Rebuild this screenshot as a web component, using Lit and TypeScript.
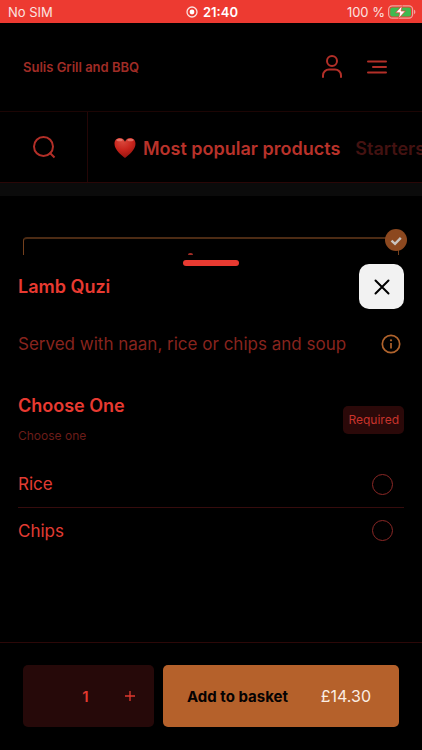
import { LitElement, html, css, svg } from "lit";
import { customElement, property, state } from "lit/decorators.js";

const userIcon = svg`<svg width="24" height="26" viewBox="0 0 24 26" fill="none" stroke="currentColor" stroke-width="2" stroke-linecap="round" aria-hidden="true"><circle cx="12" cy="7" r="5"/><path d="M3 23v-1.500a6 6 0 0 1 6-6h6a6 6 0 0 1 6 6V23"/></svg>`;
const menuIcon = svg`<svg width="22" height="16" viewBox="0 0 22 16" fill="none" stroke="currentColor" stroke-width="2" stroke-linecap="round" aria-hidden="true"><path d="M2 2.500h18M7 8h13M2 13.500h18"/></svg>`;
const searchIcon = svg`<svg width="24" height="24" viewBox="0 0 24 24" fill="none" stroke="currentColor" stroke-width="2" aria-hidden="true"><circle cx="11.500" cy="11.500" r="9.500"/><path d="M17.500 17.500l5 5"/></svg>`;
const heartIcon = svg`<svg width="22" height="22" viewBox="0 0 22 22" aria-hidden="true"><defs><radialGradient id="heart" cx=".4" cy=".15" r=".9"><stop offset="0" stop-color="#d94a3d"/><stop offset=".5" stop-color="#c8241c"/><stop offset="1" stop-color="#8f120e"/></radialGradient></defs><path d="M11 21C7 18 .5 12.500 .5 6.700.5 3.200 2.800 1 5.700 1 8.200 1 10.200 2.500 11 4.800 11.800 2.500 13.800 1 16.300 1c2.900 0 5.200 2.200 5.200 5.700C21.500 12.500 15 18 11 21z" fill="url(#heart)"/><ellipse cx="5.500" cy="3" rx="3.200" ry="1.300" fill="#f0988c" opacity=".6"/><ellipse cx="16.500" cy="3" rx="3.200" ry="1.300" fill="#f0988c" opacity=".6"/></svg>`;
const checkIcon = svg`<svg width="22" height="22" viewBox="0 0 22 22" fill="none" aria-hidden="true"><circle cx="11" cy="11" r="11" fill="#8c481f"/><path d="M6.500 11.600l3.500 3.200 5.800-6" stroke="#c9c3bf" stroke-width="2.400"/></svg>`;
const closeIcon = svg`<svg width="18" height="18" viewBox="0 0 18 18" fill="none" stroke="#000" stroke-width="2" stroke-linecap="round" aria-hidden="true"><path d="M2.500 2.500l13 13M15.500 2.500l-13 13"/></svg>`;
const infoIcon = svg`<svg width="20" height="20" viewBox="0 0 20 20" fill="none" stroke="currentColor" aria-hidden="true"><circle cx="10" cy="10" r="8.700" stroke-width="1.700"/><path d="M10 9v5.500" stroke-width="1.700"/><circle cx="10" cy="6.300" r="1.100" fill="currentColor" stroke="none"/></svg>`;
const recordIcon = svg`<svg width="12" height="12" viewBox="0 0 12 12" aria-hidden="true"><circle cx="6" cy="6" r="5" fill="none" stroke="#fbe3e0" stroke-width="1.300"/><circle cx="6" cy="6" r="2.400" fill="#fff"/></svg>`;
const batteryIcon = svg`<svg width="28" height="14" viewBox="0 0 28 14" aria-hidden="true"><rect x=".6" y=".8" width="24" height="12.400" rx="3.600" fill="none" stroke="#f3a49d" stroke-width="1.200"/><rect x="2.200" y="2.400" width="20.800" height="9.200" rx="2" fill="#3fb950"/><path d="M26 4.800c1.800.6 1.800 3.800 0 4.400z" fill="#f3a49d"/><path d="M14.200.5L7.600 7.800h4.200l-1.200 5.700 6.800-7.500h-4.300z" fill="#fff" stroke="#ea3a30" stroke-width=".7"/></svg>`;
const plusIcon = svg`<svg width="10" height="10" viewBox="0 0 10 10" stroke="currentColor" stroke-width="1.300" aria-hidden="true"><path d="M0 5h10M5 0v10"/></svg>`;

const reset = css`
  :host { display: block; }
  * { box-sizing: border-box; margin: 0; }
  button { padding: 0; border: 0; background: none; color: inherit; font: inherit; cursor: pointer; }
  svg { display: block; }
`;

@customElement("status-bar")
class StatusBar extends LitElement {
  static styles = [reset, css`
    .bar { display: grid; grid-template-columns: 1fr auto 1fr; align-items: center; height: 23px; padding: 0 6px 0 8px; background: #ed3a31; color: #fbe3e0; font-size: 13px; }
    .clock { display: flex; align-items: center; gap: 5px; color: #fff; font-weight: 600; }
    .power { display: flex; align-items: center; justify-content: flex-end; gap: 3px; }
  `];
  render() {
    return html`<div class="bar">
      <span>No SIM</span>
      <span class="clock">${recordIcon}21:40</span>
      <span class="power">100 % ${batteryIcon}</span>
    </div>`;
  }
}

@customElement("shop-header")
class ShopHeader extends LitElement {
  static styles = [reset, css`
    .top { display: flex; align-items: center; justify-content: space-between; height: 89px; padding: 0 34px 0 23px; border-bottom: 1px solid #1c0504; color: #b32f28; }
    .brand { color: #a02c26; font-size: 13px; font-weight: 600; }
    .actions { display: flex; align-items: center; gap: 22px; }
    .nav { display: flex; height: 71px; border-bottom: 1px solid #2a0707; color: #b32f28; }
    .search { display: flex; flex: 0 0 88px; align-items: center; justify-content: center; border-right: 1px solid #240606; }
    .tabs { display: flex; align-items: center; gap: 15px; min-width: 0; padding: 2px 0 0 26px; overflow: hidden; font-size: 18px; font-weight: 600; white-space: nowrap; }
    .tab { display: flex; align-items: center; gap: 7px; color: #431211; text-decoration: none; }
    .current { color: #b8322a; }
  `];
  render() {
    return html`
      <header class="top">
        <h1 class="brand">Sulis Grill and BBQ</h1>
        <div class="actions">
          <button aria-label="Account">${userIcon}</button>
          <button aria-label="Menu">${menuIcon}</button>
        </div>
      </header>
      <nav class="nav">
        <button class="search" aria-label="Search">${searchIcon}</button>
        <div class="tabs">
          <a class="tab current" href="#popular">${heartIcon}Most popular products</a>
          <a class="tab" href="#starters">Starters</a>
        </div>
      </nav>`;
  }
}

@customElement("product-sheet")
class ProductSheet extends LitElement {
  @property({ type: Array }) options = ["Rice", "Chips"];
  static styles = [reset, css`
    :host { color: #e83a31; }
    .sheet { padding: 5px 18px 0; background: #000; }
    .handle { width: 56px; height: 6px; margin: 0 auto; border-radius: 3px; background: #e83a31; }
    .heading { display: flex; align-items: center; justify-content: space-between; height: 41px; }
    .title, .group-title { font-size: 18px; font-weight: 600; line-height: 24px; }
    .close { display: flex; align-items: center; justify-content: center; width: 45px; height: 45px; border-radius: 10px; background: #f2f2f2; }
    .about { display: flex; align-items: center; justify-content: space-between; height: 74px; color: #88241e; font-size: 17px; }
    .info { margin-right: 3px; color: #b0632c; }
    .group-head { display: flex; align-items: center; justify-content: space-between; padding: 13px 0 15px; }
    .hint { margin-top: 8px; color: #6b1d19; font-size: 12px; line-height: 20px; }
    .badge { padding: 0 5px; border-radius: 5px; background: #2b0909; color: #c9342c; font-size: 12px; line-height: 28px; }
    .option { display: flex; align-items: center; justify-content: space-between; height: 46px; padding-right: 11px; font-size: 17px; color: #e23c33; }
    .option + .option { border-top: 1px solid #360c0d; }
    .radio { appearance: none; width: 21px; height: 21px; margin: 0; border: 1px solid #8a2826; border-radius: 50%; }
    .radio:checked { box-shadow: inset 0 0 0 5px #000, inset 0 0 0 11px #e83a31; }
  `];
  render() {
    return html`<section class="sheet" aria-labelledby="title">
      <div class="handle"></div>
      <div class="heading">
        <h2 class="title" id="title">Lamb Quzi</h2>
        <button class="close" aria-label="Close">${closeIcon}</button>
      </div>
      <div class="about">
        <p>Served with naan, rice or chips and soup</p>
        <button class="info" aria-label="Product information">${infoIcon}</button>
      </div>
      <div role="radiogroup" aria-labelledby="group">
        <div class="group-head">
          <div>
            <h3 class="group-title" id="group">Choose One</h3>
            <p class="hint">Choose one</p>
          </div>
          <span class="badge">Required</span>
        </div>
        ${this.options.map((name) => html`<label class="option">${name}<input class="radio" type="radio" name="side" value=${name} /></label>`)}
      </div>
    </section>`;
  }
}

@customElement("basket-bar")
class BasketBar extends LitElement {
  @state() quantity = 1;
  static styles = [reset, css`
    .bar { display: grid; grid-template-columns: 131fr 236fr; gap: 9px; padding: 22px 23px 23px; border-top: 1px solid #2c0808; font-size: 15px; }
    .stepper { display: grid; grid-template-columns: 1fr auto 1fr; align-items: center; height: 62px; padding-right: 6px; border-radius: 5px; background: #260909; color: #e0392f; font-weight: 600; }
    .count { grid-column: 2; }
    .plus { display: flex; align-items: center; justify-content: center; height: 62px; padding-left: 24px; }
    .add { display: flex; align-items: center; justify-content: space-between; height: 62px; padding: 0 28px 0 24px; border-radius: 5px; background: #b5612b; color: #fbeee4; }
    .label { color: #050202; font-weight: 700; }
    .price { font-size: 16px; }
  `];
  render() {
    return html`<footer class="bar">
      <div class="stepper">
        <output class="count">${this.quantity}</output>
        <button class="plus" aria-label="Increase quantity" @click=${() => { this.quantity += 1; }}>${plusIcon}</button>
      </div>
      <button class="add"><span class="label">Add to basket</span><span class="price">£${(14.3 * this.quantity).toFixed(2)}</span></button>
    </footer>`;
  }
}

@customElement("app-root")
class AppRoot extends LitElement {
  static styles = [reset, css`
    :host { display: flex; flex-direction: column; min-height: 100vh; background: #000; font-family: Inter, "Liberation Sans", sans-serif; }
    .main { flex: 1; }
    .strip { height: 13px; background: #0b0b0b; }
    .behind { padding: 41px 23px 0; }
    .card { position: relative; height: 18px; border: 1px solid #74401d; border-top: 2px solid #4c2b14; border-bottom: 0; border-radius: 4px 4px 0 0; }
    .check { position: absolute; top: -10px; right: -9px; }
    .peek { position: absolute; left: 164px; bottom: 0; width: 5px; height: 2px; border-radius: 3px 3px 0 0; background: #a02c25; }
  `];
  render() {
    return html`
      <status-bar></status-bar>
      <shop-header></shop-header>
      <main class="main">
        <div class="strip"></div>
        <div class="behind"><div class="card"><span class="peek"></span><span class="check">${checkIcon}</span></div></div>
        <product-sheet></product-sheet>
      </main>
      <basket-bar></basket-bar>`;
  }
}
